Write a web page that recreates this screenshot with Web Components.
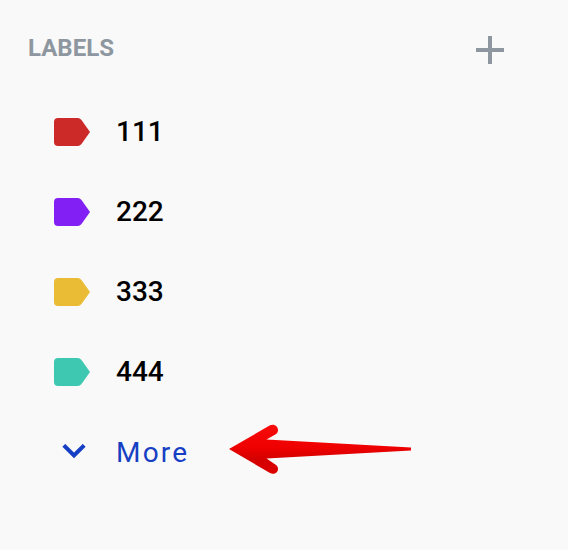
<!DOCTYPE html>
<html lang="en">
<head>
<meta charset="utf-8">
<title>Labels</title>
<style>
html, body { margin: 0; height: 100%; background: #f9f9f9; overflow: hidden; }
body { font-family: Roboto, "Liberation Sans", sans-serif; }
</style>
</head>
<body>
<labels-panel>
  <panel-header slot="header">LABELS</panel-header>
  <label-row color="#cc2929">111</label-row>
  <label-row color="#811ff5">222</label-row>
  <label-row color="#eabb34">333</label-row>
  <label-row color="#3fc8b1">444</label-row>
  <more-row slot="footer">More</more-row>
</labels-panel>
<pointer-arrow></pointer-arrow>
<script>
const define = (name, html, setup) => customElements.define(name, class extends HTMLElement {
  connectedCallback() {
    if (this.shadowRoot) return;
    this.attachShadow({ mode: 'open' }).innerHTML = html;
    if (setup) setup(this);
  }
});

define('labels-panel', `
<style>
:host { display: flex; flex-direction: column; box-sizing: border-box; width: 568px; height: 550px; padding-top: 26px; }
.list { display: flex; flex-direction: column; padding-top: 18px; }
</style>
<slot name="header"></slot>
<div class="list"><slot></slot></div>
<slot name="footer"></slot>`);

define('panel-header', `
<style>
:host { display: flex; justify-content: space-between; height: 48px; padding: 0 64px 0 28px; color: #8e979f; }
.title { font-size: 24px; font-weight: 700; line-height: 45px; letter-spacing: 0; }
svg { display: block; width: 28px; height: 28px; margin-top: 10px; }
</style>
<span class="title"><slot></slot></span>
<svg viewBox="0 0 28 28" fill="currentColor"><path d="M12 0h4v12h12v4H16v12h-4V16H0v-4h12z"/></svg>`);

define('label-row', `
<style>
:host { display: flex; align-items: center; height: 80px; padding-left: 54px; gap: 26px; color: #000; }
svg { display: block; width: 36px; height: 28px; flex: none; }
span { font-size: 28px; font-weight: 500; line-height: 80px; }
</style>
<svg viewBox="0 0 36 28"><path d="M4 0H23.5Q26 0 27.5 2L36 14L27.5 26Q26 28 23.5 28H4Q0 28 0 24V4Q0 0 4 0Z"/></svg>
<span><slot></slot></span>`,
  el => el.shadowRoot.querySelector('path').setAttribute('fill', el.getAttribute('color')));

define('more-row', `
<style>
:host { display: flex; align-items: center; height: 80px; padding-left: 62px; gap: 30px; color: #173fc4; }
svg { display: block; width: 24px; height: 16px; flex: none; }
span { font-size: 28px; font-weight: 400; line-height: 80px; padding-top: 2px; letter-spacing: 2.2px; }
</style>
<svg viewBox="0 0 24 16"><path d="M1.8 1.3L12 11.5L22.2 1.3" fill="none" stroke="currentColor" stroke-width="4"/></svg>
<span><slot></slot></span>`);

define('pointer-arrow', `
<style>
:host { position: absolute; left: 229px; top: 423px; width: 184px; height: 52px; }
svg { display: block; }
</style>
<svg width="184" height="52" viewBox="0 0 184 52">
<defs><linearGradient id="g" x1="0" y1="0" x2="0" y2="1"><stop offset="0" stop-color="#f80b0b"/><stop offset=".46" stop-color="#ef0000"/><stop offset=".7" stop-color="#d50000"/><stop offset="1" stop-color="#dc0000"/></linearGradient></defs>
<path fill="url(#g)" d="M0 26L41 2.3C44.5 .4 49 2.7 49 7C49 9 48 10.5 46.3 11.6L37.5 16.5L182 24.6V27.6L37.5 35.5L46.3 41.5C48 42.5 49 44 49 46C49 50 44.5 52 41 50Z"/>
</svg>`);
</script>
</body>
</html>
